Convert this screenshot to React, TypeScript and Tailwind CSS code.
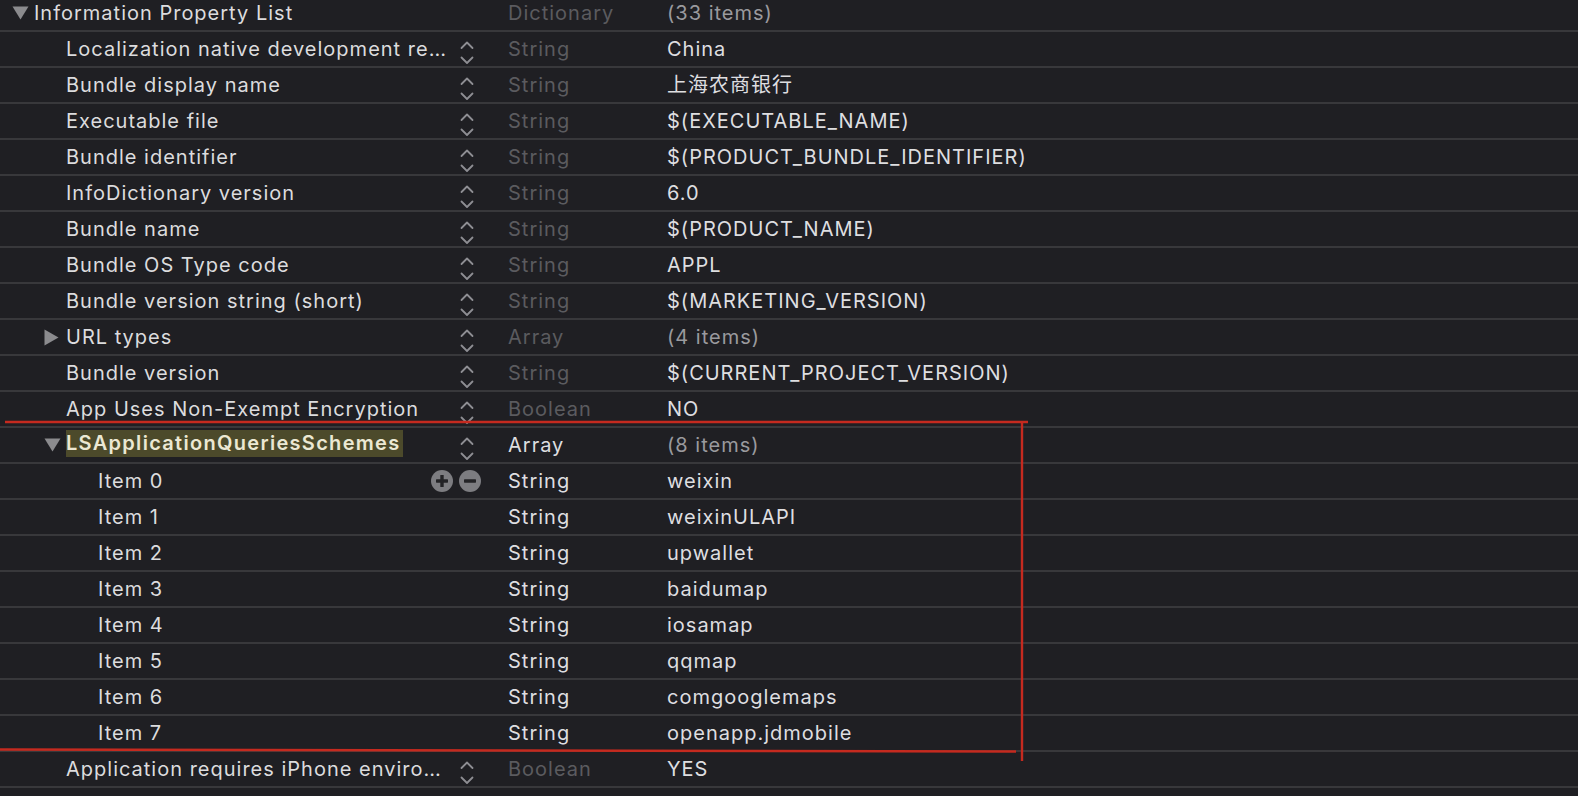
import React from 'react';

type Row = {
  name: string;
  level: 0 | 1 | 2;
  type: string;
  value: string;
  disclosure?: 'open' | 'closed';
  stepper?: boolean;
  buttons?: boolean;
  bright?: boolean;
  countValue?: boolean;
  selected?: boolean;
};

const rows: Row[] = [
  { name: 'Information Property List', level: 0, type: 'Dictionary', value: '(33 items)', disclosure: 'open', countValue: true },
  { name: 'Localization native development re…', level: 1, type: 'String', value: 'China', stepper: true },
  { name: 'Bundle display name', level: 1, type: 'String', value: '上海农商银行', stepper: true },
  { name: 'Executable file', level: 1, type: 'String', value: '$(EXECUTABLE_NAME)', stepper: true },
  { name: 'Bundle identifier', level: 1, type: 'String', value: '$(PRODUCT_BUNDLE_IDENTIFIER)', stepper: true },
  { name: 'InfoDictionary version', level: 1, type: 'String', value: '6.0', stepper: true },
  { name: 'Bundle name', level: 1, type: 'String', value: '$(PRODUCT_NAME)', stepper: true },
  { name: 'Bundle OS Type code', level: 1, type: 'String', value: 'APPL', stepper: true },
  { name: 'Bundle version string (short)', level: 1, type: 'String', value: '$(MARKETING_VERSION)', stepper: true },
  { name: 'URL types', level: 1, type: 'Array', value: '(4 items)', disclosure: 'closed', stepper: true, countValue: true },
  { name: 'Bundle version', level: 1, type: 'String', value: '$(CURRENT_PROJECT_VERSION)', stepper: true },
  { name: 'App Uses Non-Exempt Encryption', level: 1, type: 'Boolean', value: 'NO', stepper: true },
  { name: 'LSApplicationQueriesSchemes', level: 1, type: 'Array', value: '(8 items)', disclosure: 'open', stepper: true, bright: true, countValue: true, selected: true },
  { name: 'Item 0', level: 2, type: 'String', value: 'weixin', bright: true, buttons: true },
  { name: 'Item 1', level: 2, type: 'String', value: 'weixinULAPI', bright: true },
  { name: 'Item 2', level: 2, type: 'String', value: 'upwallet', bright: true },
  { name: 'Item 3', level: 2, type: 'String', value: 'baidumap', bright: true },
  { name: 'Item 4', level: 2, type: 'String', value: 'iosamap', bright: true },
  { name: 'Item 5', level: 2, type: 'String', value: 'qqmap', bright: true },
  { name: 'Item 6', level: 2, type: 'String', value: 'comgooglemaps', bright: true },
  { name: 'Item 7', level: 2, type: 'String', value: 'openapp.jdmobile', bright: true },
  { name: 'Application requires iPhone enviro…', level: 1, type: 'Boolean', value: 'YES', stepper: true },
  { name: 'Launch screen interface file base name', level: 1, type: 'String', value: 'LaunchScreen', stepper: true },
];

const indent = { 0: 'pl-[12px]', 1: 'pl-[44px]', 2: 'pl-[76px]' };

const Stepper = () => (
  <svg width="14" height="34" viewBox="0 0 14 34" fill="none" stroke="#8e8e93" strokeWidth="1.8" strokeLinecap="round" strokeLinejoin="round">
    <path d="M1.5 16 L7 10.5 L12.5 16" />
    <path d="M1.5 25.5 L7 31 L12.5 25.5" />
  </svg>
);

const Disclosure = ({ open }: { open: boolean }) =>
  open ? (
    <svg width="17" height="14" viewBox="0 0 17 14">
      <path d="M0.5 0.5 H16.5 L8.5 13.5 Z" fill="#8b8b8e" />
    </svg>
  ) : (
    <svg width="15" height="17" viewBox="0 0 15 17">
      <path d="M0.5 0.5 L14.5 8.5 L0.5 16.5 Z" fill="#8b8b8e" />
    </svg>
  );

const RoundButton = ({ plus }: { plus?: boolean }) => (
  <svg width="22" height="22" viewBox="0 0 22 22">
    <circle cx="11" cy="11" r="11" fill="#7d7d81" />
    <rect x="5" y="9.3" width="12" height="3.4" rx="0.6" fill="#232326" />
    {plus && <rect x="9.3" y="5" width="3.4" height="12" rx="0.6" fill="#232326" />}
  </svg>
);

const PlistRow = ({ row }: { row: Row }) => {
  const typeColor = row.bright ? 'text-[#dedee0]' : 'text-[#5b5b5f]';
  const valueColor = row.countValue ? 'text-[#9a9a9e]' : 'text-[#dedee0]';
  return (
    <div className="flex h-[36px] items-center border-b-2 border-[#38383b] whitespace-nowrap">
      <div className={`flex w-[428px] shrink-0 items-center ${indent[row.level]}`}>
        <div className="flex w-[22px] shrink-0 items-center">
          {row.disclosure && <Disclosure open={row.disclosure === 'open'} />}
        </div>
        {row.selected ? (
          <span className="flex h-[27px] -mt-[4px] items-center bg-[#4c4a2b] pr-[2px] font-semibold tracking-[1.3px] text-[#ebe8d3]">
            {row.name}
          </span>
        ) : (
          <span className="text-[#dcdcde]">{row.name}</span>
        )}
      </div>
      <div className="flex w-[80px] shrink-0 items-center">
        {row.stepper && (
          <div className="pl-[32px]">
            <Stepper />
          </div>
        )}
        {row.buttons && (
          <div className="flex gap-[6px] pl-[3px]">
            <RoundButton plus />
            <RoundButton />
          </div>
        )}
      </div>
      <div className={`w-[159px] shrink-0 ${typeColor}`}>{row.type}</div>
      <div className={`flex-1 ${valueColor}`}>{row.value}</div>
    </div>
  );
};

export default function App() {
  return (
    <div
      className="relative h-[796px] w-[1578px] overflow-hidden bg-[#1f1f23] text-[20px] leading-none tracking-[1px]"
      style={{ fontFamily: 'Inter, "Noto Sans CJK SC", sans-serif' }}
    >
      <div className="-mt-[4px]">
        {rows.map((row, i) => (
          <PlistRow key={i} row={row} />
        ))}
      </div>
      {/* red annotation box */}
      <svg className="pointer-events-none absolute inset-0" width="1578" height="796">
        <g stroke="#c52a1f" strokeWidth="2.4" fill="none">
          <line x1="5" y1="422" x2="1028" y2="422" />
          <line x1="1022" y1="421" x2="1022" y2="761" />
          <line x1="0" y1="749.5" x2="1016" y2="751.5" />
        </g>
      </svg>
    </div>
  );
}
